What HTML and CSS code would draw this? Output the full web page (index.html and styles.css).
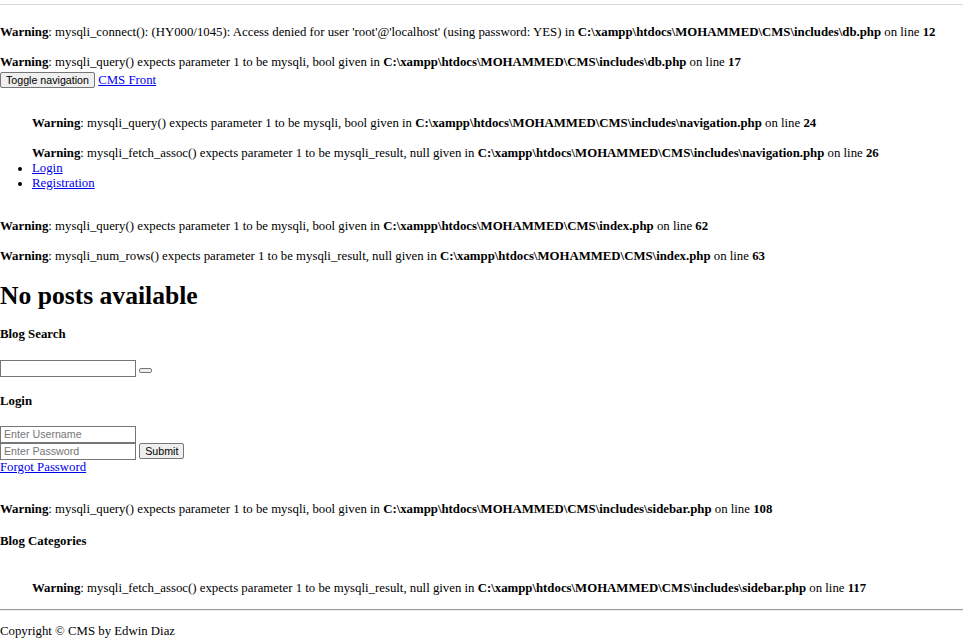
FILE: index.html
```html
<!DOCTYPE html>
<html lang="en">
<head>
<meta charset="utf-8">
<title>CMS</title>
<link rel="stylesheet" href="styles.css">
</head>
<body>
<hr class="top-rule">
<div class="errors">
<br><b>Warning</b>:  mysqli_connect(): (HY000/1045): Access denied for user 'root'@'localhost' (using password: YES) in <b>C:\xampp\htdocs\MOHAMMED\CMS\includes\db.php</b> on line <b>12</b><br>
<br><b>Warning</b>:  mysqli_query() expects parameter 1 to be mysqli, bool given in <b>C:\xampp\htdocs\MOHAMMED\CMS\includes\db.php</b> on line <b>17</b><br>
</div>
<nav class="navbar">
  <div class="nav-head"><button class="btn" type="button">Toggle navigation</button> <a href="#">CMS Front</a></div>
  <ul class="nav-list">
<br><b>Warning</b>:  mysqli_query() expects parameter 1 to be mysqli, bool given in <b>C:\xampp\htdocs\MOHAMMED\CMS\includes\navigation.php</b> on line <b>24</b><br>
<br><b>Warning</b>:  mysqli_fetch_assoc() expects parameter 1 to be mysqli_result, null given in <b>C:\xampp\htdocs\MOHAMMED\CMS\includes\navigation.php</b> on line <b>26</b><br>
    <li><a href="#">Login</a></li>
    <li><a href="#">Registration</a></li>
  </ul>
</nav>
<div class="errors">
<br><b>Warning</b>:  mysqli_query() expects parameter 1 to be mysqli, bool given in <b>C:\xampp\htdocs\MOHAMMED\CMS\index.php</b> on line <b>62</b><br>
<br><b>Warning</b>:  mysqli_num_rows() expects parameter 1 to be mysqli_result, null given in <b>C:\xampp\htdocs\MOHAMMED\CMS\index.php</b> on line <b>63</b><br>
</div>
<h1 class="title">No posts available</h1>
<h4 class="side-title">Blog Search</h4>
<form class="search-form"><input class="field" type="text"> <button class="btn-empty" type="button"></button></form>
<h4 class="side-title">Login</h4>
<form class="login-form">
  <input class="field" type="text" placeholder="Enter Username"><br>
  <input class="field" type="password" placeholder="Enter Password"> <button class="btn" type="button">Submit</button><br>
  <a href="#">Forgot Password</a>
</form>
<div class="errors sidebar-errors">
<br><b>Warning</b>:  mysqli_query() expects parameter 1 to be mysqli, bool given in <b>C:\xampp\htdocs\MOHAMMED\CMS\includes\sidebar.php</b> on line <b>108</b><br>
</div>
<h4 class="side-title">Blog Categories</h4>
<ul class="cat-list">
<br><b>Warning</b>:  mysqli_fetch_assoc() expects parameter 1 to be mysqli_result, null given in <b>C:\xampp\htdocs\MOHAMMED\CMS\includes\sidebar.php</b> on line <b>117</b><br>
</ul>
<hr class="foot-rule">
<footer class="footer"><p>Copyright © CMS by Edwin Diaz</p></footer>
</body>
</html>
```
FILE: styles.css
```css
html, body {
  background: #fff;
}
body {
  margin: 0;
  font-family: "Liberation Serif", "Times New Roman", serif;
  font-size: 12.8px;
  line-height: 15px;
  color: #000;
}
a {
  color: #0000ee;
  text-decoration: underline;
}
b {
  font-weight: bold;
}
.top-rule {
  border: 0;
  border-top: 1px solid #d6d6d6;
  height: 0;
  margin: 4px 0 5px;
}
.nav-head {
  line-height: 15px;
  padding: 2px 0 0;
}
.btn {
  font-family: "Liberation Sans", Arial, sans-serif;
  font-size: 10.67px;
  line-height: 12px;
  color: #000;
  background: #efefef;
  border: 1px solid #767676;
  border-radius: 2px;
  padding: 1px 5px 1px;
  margin: 0;
  vertical-align: baseline;
}
.nav-list,
.cat-list {
  margin: 12.8px 0;
  padding-left: 32px;
  list-style: disc;
}
.title {
  font-size: 25.6px;
  line-height: 29px;
  font-weight: bold;
  margin: 17px 0;
}
.side-title {
  font-size: 12.8px;
  line-height: 15px;
  font-weight: bold;
  margin: 17px 0;
}
.search-form,
.login-form {
  margin: 0;
}
.search-form {
  padding-top: 1px;
}
.field {
  box-sizing: border-box;
  width: 136px;
  height: 17px;
  margin: 0;
  padding: 0 3px;
  border: 1px solid #767676;
  border-radius: 0;
  font-family: "Liberation Sans", Arial, sans-serif;
  font-size: 10.67px;
  color: #000;
  background: #fff;
  vertical-align: baseline;
}
.field::placeholder {
  color: #757575;
}
.btn-empty {
  display: inline-block;
  box-sizing: border-box;
  width: 13px;
  height: 5px;
  padding: 0;
  margin: 0;
  border: 1px solid #767676;
  border-radius: 2px;
  background: #efefef;
  vertical-align: baseline;
}
.sidebar-errors {
  margin-top: 12.8px;
}
.foot-rule {
  border: 0;
  border-top: 1px solid #9a9a9a;
  border-bottom: 1px solid #eeeeee;
  height: 0;
  margin: 6.4px 0;
}
.footer p {
  margin: 12.8px 0 0;
}
```
